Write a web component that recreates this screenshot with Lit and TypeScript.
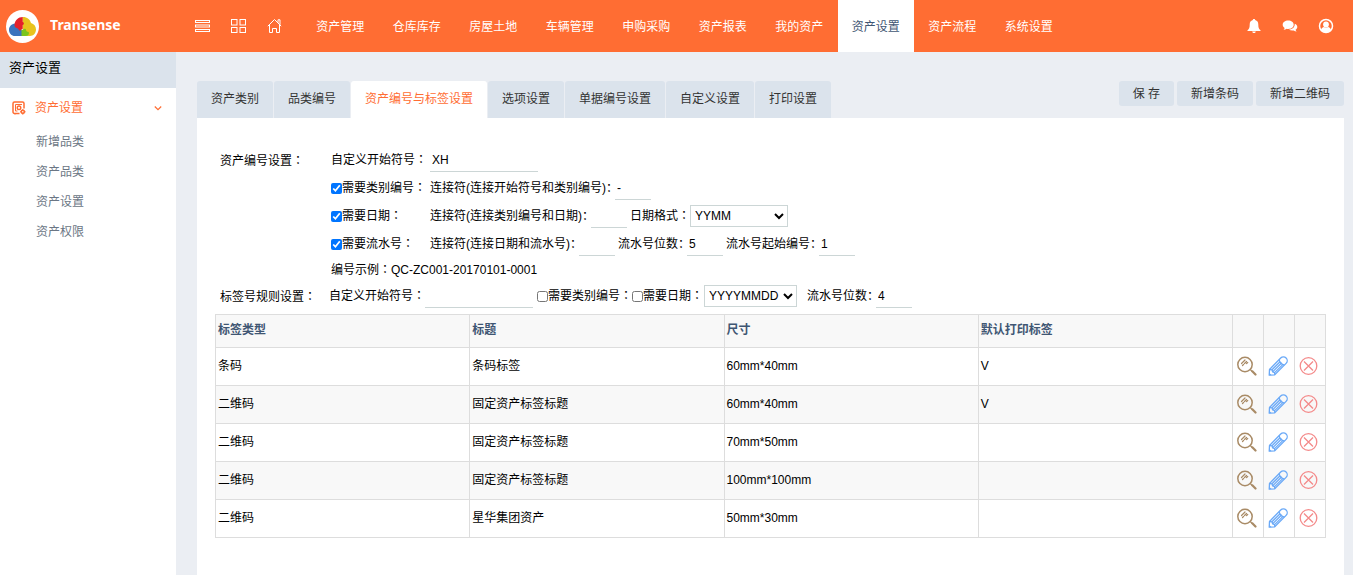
import { LitElement, html, css, svg, nothing } from "lit";
import { customElement, state } from "lit/decorators.js";

const NAV = ["资产管理", "仓库库存", "房屋土地", "车辆管理", "申购采购", "资产报表", "我的资产", "资产设置", "资产流程", "系统设置"];
const SUB = ["新增品类", "资产品类", "资产设置", "资产权限"];
const TABS = ["资产类别", "品类编号", "资产编号与标签设置", "选项设置", "单据编号设置", "自定义设置", "打印设置"];
const ACTIONS = ["保 存", "新增条码", "新增二维码"];
const ROWS = [
  { type: "条码", title: "条码标签", size: "60mm*40mm", def: true },
  { type: "二维码", title: "固定资产标签标题", size: "60mm*40mm", def: true },
  { type: "二维码", title: "固定资产标签标题", size: "70mm*50mm", def: false },
  { type: "二维码", title: "固定资产标签标题", size: "100mm*100mm", def: false },
  { type: "二维码", title: "星华集团资产", size: "50mm*30mm", def: false },
];

const icon = (size: number, body: unknown) => html`<svg width=${size} height=${size} viewBox="0 0 ${size} ${size}" fill="none" aria-hidden="true">${body}</svg>`;

const listIcon = icon(16, svg`<g stroke="#fff"><rect x=".5" y="2.500" width="14" height="2"/><rect x=".5" y="7" width="14" height="2"/><rect x=".5" y="11.500" width="14" height="2"/></g>`);
const gridIcon = icon(16, svg`<g stroke="#fff"><rect x=".5" y="1.500" width="5.500" height="5.500"/><rect x="9" y="1.500" width="5.500" height="5.500"/><rect x=".5" y="9.500" width="5.500" height="5"/><rect x="9" y="9.500" width="5.500" height="5"/></g>`);
const homeIcon = icon(16, svg`<path d="M.8 8.200 7.500 1.500l6.700 6.700M11 4.800V1.800h2v5M2.500 7v7.500h3v-4h4v4h3V7" stroke="#fff"/>`);
const bellIcon = icon(16, svg`<path fill="#fff" d="M8 1c.8 0 1.200.5 1.200 1.100C11.300 2.700 12.300 4.300 12.300 6.500c0 2.800.5 4.500 2.200 5.700v.8h-13v-.8C3.200 11 3.700 9.300 3.700 6.500c0-2.200 1-3.800 3.100-4.400C6.800 1.500 7.200 1 8 1ZM6.200 13.500h3.600c-.2 1-.9 1.500-1.800 1.500s-1.600-.5-1.800-1.500Z"/>`);
const chatIcon = icon(16, svg`<path fill="#fff" d="M6.200 2.500c3.200 0 5.500 1.800 5.500 4.200s-2.300 4.200-5.500 4.200c-.5 0-1-.1-1.500-.2-.9.6-1.900 1-3.200 1.100.6-.6 1-1.200 1.100-1.900C1.400 9.100.7 8 .7 6.700c0-2.400 2.300-4.200 5.500-4.200Z"/><path fill="#fff" d="M12.700 5.700c1.600.7 2.600 1.800 2.600 3.200 0 1.200-.7 2.100-1.700 2.800.1.700.5 1.300 1.100 1.800-1.200-.1-2.200-.5-3-1.100-2 .3-3.700-.1-4.900-.9 3.600-.1 6.300-2.300 5.900-5.800Z"/>`);
const userIcon = icon(16, svg`<circle cx="8" cy="8" r="6.500" stroke="#fff" stroke-width="1.500"/><circle cx="8" cy="6.500" r="2.900" fill="#fff"/><path fill="#fff" d="M3 12c.4-1.800 1.600-2.700 3-3 1.200.8 2.800.8 4 0 1.400.3 2.600 1.200 3 3-2.600 3-7.400 3-10 0Z"/>`);
const assetIcon = icon(14, svg`<g stroke="#ff6d33"><path d="M7.500 12.500h-5a1.500 1.500 0 0 1-1.500-1.500V2.500A1.500 1.500 0 0 1 2.500 1h8A1.500 1.500 0 0 1 12 2.500v5M3 12.500v1" stroke-width="1.500"/><path d="M3.500 3.500h6.500M3.500 3.500v6.500h2"/><circle cx="7" cy="6.800" r="1.800" stroke-width="1.400"/><circle cx="10.800" cy="10.800" r="1.600" stroke-width="1.600"/><path d="M10.800 8v1M10.800 12.600v1M8 10.800h1M12.600 10.800h1"/></g>`);
const downIcon = icon(8, svg`<path d="M.8 2.500 4 5.700l3.200-3.200" stroke="#ff6d33" stroke-width="1.200"/>`);
const viewIcon = icon(20, svg`<g stroke="#a98b66" stroke-linecap="round"><circle cx="8" cy="8.500" r="7.200" stroke-width="1.500"/><path d="m13.500 13.800 1.800 1.800" stroke-width="1.300"/><path d="m15.300 15.300 3.200 3.200" stroke-width="2.200"/><path d="M4.500 7.500 8 4M5.500 9.500l1-1M7.500 7.500 9.500 5.500M9.500 7.700l1.200-1.200" stroke-width="1.200"/></g>`);
const editIcon = icon(20, svg`<g stroke="#6aa9f7" stroke-width="1.300" stroke-linejoin="round"><path d="M1.500 13.500 12.700 2a3.800 3.800 0 0 1 5.400 5.400L6.700 18.800l-5.500.4Z"/><path d="M11 3.700c.8 2.800 2.600 4.500 5.400 5.300M1.500 13.500l2.500.3.600 2.100 2 .7.100 2.200M4 13.800l8.300-8.300M4.600 15.900l9.200-9.200M6.600 16.600 15 8.400"/></g><path d="m1.200 16.800 2.200 2.300-2.200.1Z" fill="#6aa9f7"/>`);
const removeIcon = icon(20, svg`<g stroke="#f48a8a" stroke-width="1.300"><circle cx="9.500" cy="10" r="8.300"/><path d="m5 5.500 9 9m0-9-9 9"/></g>`);
const logo = html`<svg class="logo" width="33" height="33" viewBox="0 0 33 33" aria-hidden="true">
  <circle cx="16.500" cy="16.500" r="16.500" fill="#fff"/>
  <path fill="#3b73bd" d="M9 13.500c-3.400.3-6 3-6 6.200C3 23.300 5.600 26 9 26h8v-5l-3-2-5-5.500Z"/>
  <path fill="#e8c31d" d="M16.500 7c4.200-.3 7.500 2.300 8.500 6 2.900.8 5 3.300 5 6.500 0 3.700-2.700 6.500-6 6.500h-4l-3.500-8V7Z"/>
  <path fill="#7ac51d" d="M15.500 19.500c1.500.8 2.300-1.500 3.700-.7 1.200.6.600 1.700 1.400 2.400 1 .8 2.400.2 2.400 1.800 0 1.800-1.300 3-3.500 3h-4Z"/>
  <path fill="#e5202a" d="M8.500 14.500C9 10.300 12.300 7 16.700 7v5c1.600.5 1.600 2.500 0 3v4c-1.400 0-1.300 1.600-2.700 1.600s-1.200-1.700-2.300-2.200c-1.200-.6-3.400-.8-3.200-3.900Z"/>
</svg>`;

// Labels followed directly by a short field use the narrow colon.
const label = (text: string) => html`${text}<span class="colon">：</span>`;
const tight = (text: string) => html`${text}<span class="colon narrow">：</span>`;

@customElement("app-root")
export class AppRoot extends LitElement {
  static styles = css`
    :host { display: block; min-height: 100vh; background: #ebeef3; color: #000; font: 12px/18px "Liberation Sans", "Noto Sans CJK SC", sans-serif; }
    * { box-sizing: border-box; }
    a { color: inherit; text-decoration: none; }
    button, input, select { font: inherit; color: inherit; margin: 0; }
    svg { display: block; }
    header { display: flex; height: 52px; background: #ff6d33; color: #fff; }
    .brand { display: flex; align-items: center; gap: 11px; flex: 0 0 189px; padding-left: 6px; font: bold 14px/20px "Noto Sans", sans-serif; }
    .brand span { padding-bottom: 2px; }
    .tools { display: flex; align-items: center; gap: 20px; flex: 0 0 113px; padding-left: 6px; }
    nav { display: flex; flex: 0 1 765px; }
    nav a { flex: 1; display: grid; place-items: center; padding-top: 2px; white-space: nowrap; }
    nav a.on { background: #fff; color: #3f5673; }
    .user { display: flex; align-items: center; gap: 20px; margin-left: auto; padding-right: 19px; }
    .body { display: flex; min-height: calc(100vh - 52px); }
    aside { flex: 0 0 176px; background: #fff; }
    h2 { margin: 0; height: 36px; padding: 7px 9px; background: #dbe3ec; font-size: 13px; line-height: 18px; font-weight: normal; }
    .group { display: flex; align-items: center; height: 38px; padding: 2px 14px 0 12px; gap: 9px; color: #ff6d33; }
    .group svg:last-child { margin-left: auto; }
    ul { list-style: none; margin: 0; padding: 1px 0 0 36px; color: #6b7684; }
    li { line-height: 30px; }
    main { flex: 1; min-width: 0; padding: 29px 9px 0 21px; display: flex; flex-direction: column; }
    .bar { display: flex; justify-content: space-between; align-items: flex-start; }
    .tabs { display: flex; gap: 1px; }
    button { border: 0; background: #dbe3ec; color: #333; padding: 0 14px; cursor: pointer; white-space: nowrap; }
    .tabs button { height: 37px; padding-bottom: 2px; border-radius: 3px 3px 0 0; }
    .tabs button.on { background: #fff; color: #ff6d33; }
    .acts { display: flex; gap: 3px; }
    .acts button { height: 25px; border-radius: 3px; }
    .panel { flex: 1; background: #fff; padding: 28px 18px; }
    .form { display: grid; grid-template-columns: 111px 1fr; grid-template-rows: repeat(4, 28px) 24px 28px; padding: 0 0 4px 5px; }
    .head { line-height: 30px; }
    .line { display: flex; align-items: center; grid-column: 2; white-space: nowrap; }
    .form .rule { margin-left: -2px; }
    .first { flex: 0 0 99px; display: flex; align-items: center; }
    label { display: flex; align-items: center; }
    .colon { display: inline-block; width: 12px; font-family: "Noto Sans CJK TC", sans-serif; line-height: 1; }
    .narrow { width: 9px; font-family: "Noto Sans CJK SC", sans-serif; }
    input[type="checkbox"] { width: 11px; height: 11px; }
    input[type="text"] { width: 36px; height: 24px; border: 0; border-bottom: 1px solid #ccd6d6; background: none; padding: 0 2px; outline: none; }
    input[type="text"].wide { width: 108px; }
    select { height: 22px; border: 1px solid #ccd6d6; background: #fff; padding: 0; width: 98px; }
    .rule select { width: 93px; margin-left: 1px; }
    .next { margin-left: 3px; }
    .flag { margin-left: 4px; }
    .gap { margin-left: 10px; }
    table { width: 100%; border-collapse: collapse; table-layout: fixed; }
    th, td { border: 1px solid #ddd; padding: 0 2px 2px; text-align: left; height: 38px; }
    th { height: 33px; color: #3f5673; background: #f8f8f8; padding-bottom: 3px; }
    tbody tr:nth-child(even) { background: #f8f8f8; }
    .act { width: 31px; }
    td button { display: block; background: none; padding: 0 0 0 2px; }
  `;

  @state() private tab = 2;

  private text(name: string, value = "", wide = false) {
    return html`<input type="text" class=${wide ? "wide" : ""} aria-label=${name} .value=${value}>`;
  }

  private check(text: string, on: boolean) {
    return html`<label><input type="checkbox" .checked=${on}><span>${label(text)}</span></label>`;
  }

  render() {
    return html`
      <header>
        <div class="brand">${logo}<span>Transense</span></div>
        <div class="tools">${listIcon}${gridIcon}${homeIcon}</div>
        <nav>${NAV.map((n, i) => html`<a href="#" class=${i === 7 ? "on" : ""}>${n}</a>`)}</nav>
        <div class="user">${bellIcon}${chatIcon}${userIcon}</div>
      </header>
      <div class="body">
        <aside>
          <h2>资产设置</h2>
          <a href="#" class="group">${assetIcon}<span>资产设置</span>${downIcon}</a>
          <ul>${SUB.map((s) => html`<li><a href="#">${s}</a></li>`)}</ul>
        </aside>
        <main>
          <div class="bar">
            <div class="tabs">${TABS.map((t, i) => html`<button class=${i === this.tab ? "on" : ""} @click=${() => (this.tab = i)}>${t}</button>`)}</div>
            <div class="acts">${ACTIONS.map((a) => html`<button>${a}</button>`)}</div>
          </div>
          <section class="panel">
            <div class="form">
              <div class="head">${label("资产编号设置")}</div>
              <div class="line"><label><span class="first"><span>${label("自定义开始符号")}</span></span>${this.text("自定义开始符号", "XH", true)}</label></div>
              <div class="line"><span class="first">${this.check("需要类别编号", true)}</span><label><span>${tight("连接符(连接开始符号和类别编号)")}</span>${this.text("连接符", "-")}</label></div>
              <div class="line"><span class="first">${this.check("需要日期", true)}</span><label><span>${tight("连接符(连接类别编号和日期)")}</span>${this.text("连接符")}</label>
                <label class="next"><span>${label("日期格式")}</span><select><option>YYMM</option><option>YYYYMMDD</option></select></label></div>
              <div class="line"><span class="first">${this.check("需要流水号", true)}</span><label><span>${tight("连接符(连接日期和流水号)")}</span>${this.text("连接符")}</label>
                <label class="next"><span>${tight("流水号位数")}</span>${this.text("流水号位数", "5")}</label>
                <label class="next"><span>${tight("流水号起始编号")}</span>${this.text("流水号起始编号", "1")}</label></div>
              <div class="line"><span>${label("编号示例")}QC-ZC001-20170101-0001</span></div>
              <div class="head">${label("标签号规则设置")}</div>
              <div class="line rule"><label><span>${label("自定义开始符号")}</span>${this.text("自定义开始符号", "", true)}</label>
                <span class="flag">${this.check("需要类别编号", false)}</span>${this.check("需要日期", false)}
                <select aria-label="日期格式"><option>YYYYMMDD</option><option>YYMM</option></select>
                <label class="gap"><span>${tight("流水号位数")}</span>${this.text("流水号位数", "4")}</label></div>
            </div>
            <table>
              <thead><tr><th>标签类型</th><th>标题</th><th>尺寸</th><th>默认打印标签</th><th class="act"></th><th class="act"></th><th class="act"></th></tr></thead>
              <tbody>${ROWS.map((r) => html`<tr>
                <td>${r.type}</td><td>${r.title}</td><td>${r.size}</td><td>${r.def ? "V" : nothing}</td>
                <td><button aria-label="查看">${viewIcon}</button></td>
                <td><button aria-label="编辑">${editIcon}</button></td>
                <td><button aria-label="删除">${removeIcon}</button></td>
              </tr>`)}</tbody>
            </table>
          </section>
        </main>
      </div>`;
  }
}
